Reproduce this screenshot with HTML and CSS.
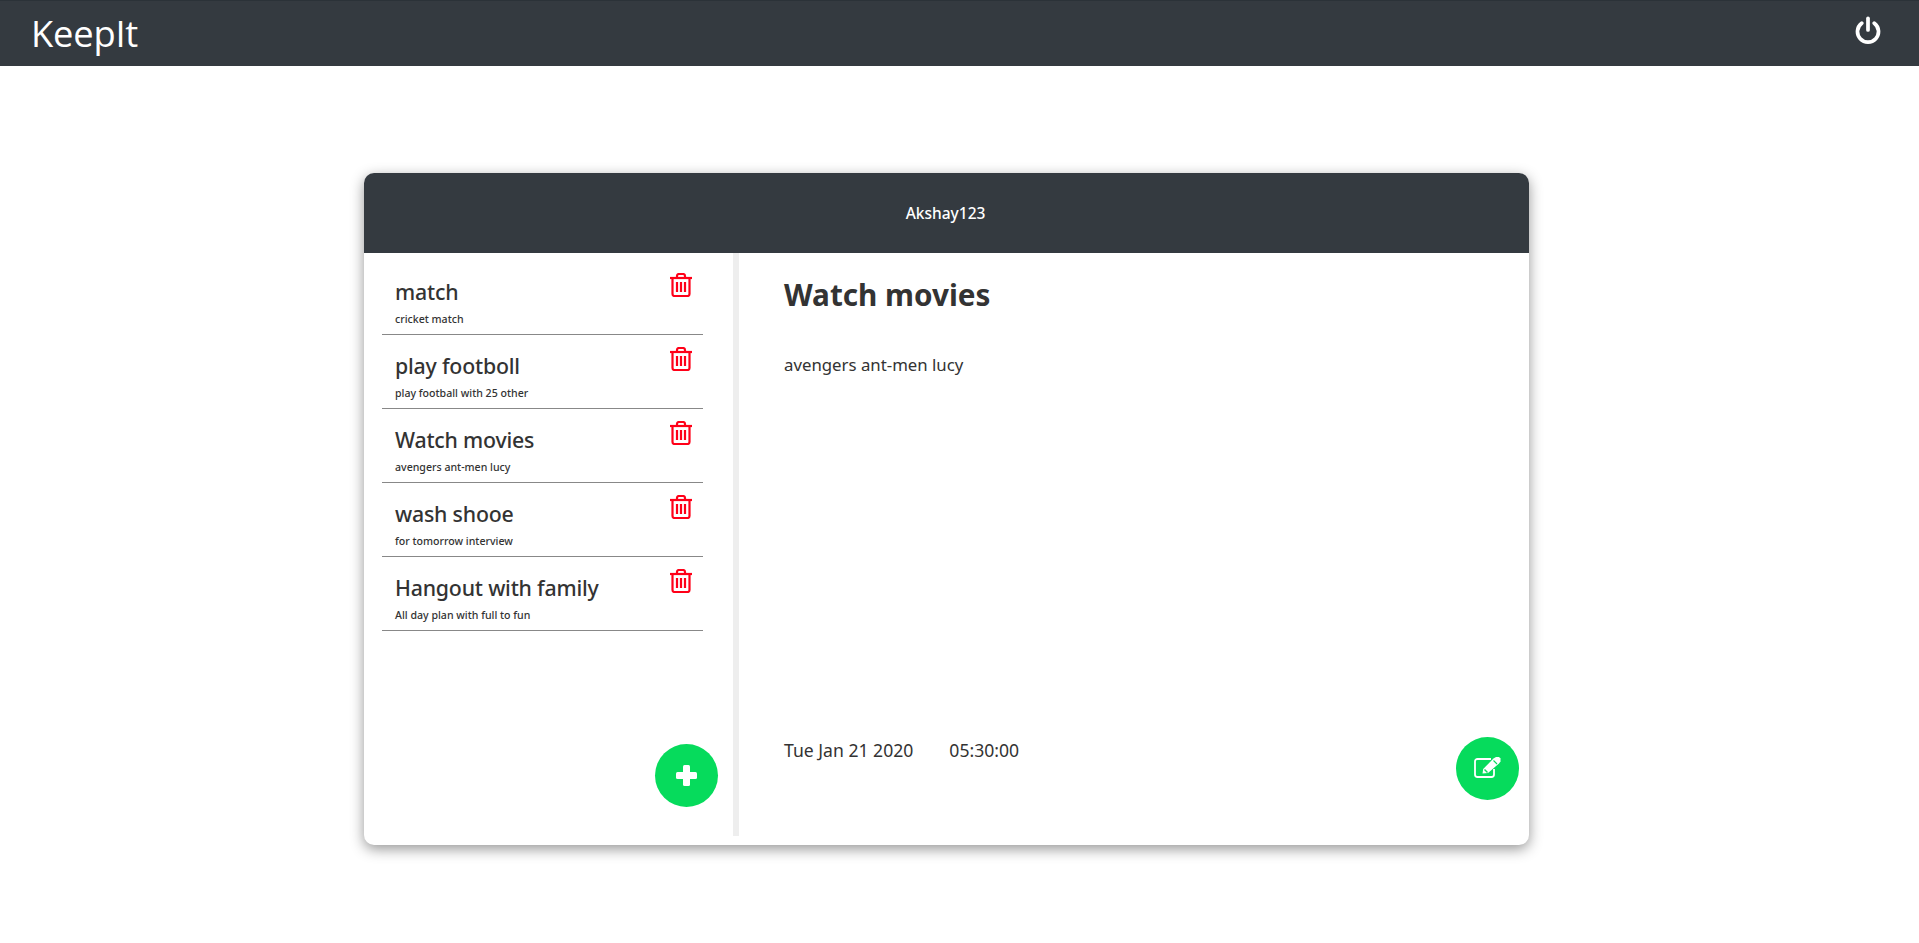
FILE: index.html
```html
<!DOCTYPE html>
<html lang="en">
<head>
<meta charset="utf-8">
<title>KeepIt</title>
<link rel="stylesheet" href="styles.css">
</head>
<body>
<svg class="defs" width="0" height="0" aria-hidden="true">
  <symbol id="trash" viewBox="0 0 22 24">
    <g fill="none" stroke="currentColor" stroke-width="2.2">
      <path d="M0 5h22"/>
      <path d="M7 5V3a2 2 0 0 1 2-2h4a2 2 0 0 1 2 2v2"/>
      <path d="M2.500 5v16a2 2 0 0 0 2 2h13a2 2 0 0 0 2-2V5"/>
      <path d="M7 9v10M11 9v10M15 9v10"/>
    </g>
  </symbol>
</svg>
<nav class="navbar">
  <span class="brand">KeepIt</span>
  <svg class="power" viewBox="0 0 24 24"><path d="M12 2v10" fill="none" stroke="#fff" stroke-width="3.200" stroke-linecap="round"/><path d="M6.600 6.200a9 9 0 1 0 10.800 0" fill="none" stroke="#fff" stroke-width="3.200" stroke-linecap="round"/></svg>
</nav>
<main class="page">
  <section class="card">
    <header class="card-head">Akshay123</header>
    <div class="card-body">
      <aside class="sidebar">
        <ul class="notes">
          <li class="note"><div><h3 class="note-title">match</h3><p class="note-sub">cricket match</p></div><svg class="trash"><use href="#trash"/></svg></li>
          <li class="note"><div><h3 class="note-title">play footboll</h3><p class="note-sub">play football with 25 other</p></div><svg class="trash"><use href="#trash"/></svg></li>
          <li class="note"><div><h3 class="note-title">Watch movies</h3><p class="note-sub">avengers ant-men lucy</p></div><svg class="trash"><use href="#trash"/></svg></li>
          <li class="note"><div><h3 class="note-title">wash shooe</h3><p class="note-sub">for tomorrow interview</p></div><svg class="trash"><use href="#trash"/></svg></li>
          <li class="note"><div><h3 class="note-title">Hangout with family</h3><p class="note-sub">All day plan with full to fun</p></div><svg class="trash"><use href="#trash"/></svg></li>
        </ul>
        <button class="fab fab-add" aria-label="Add">
          <svg viewBox="0 0 21 21" class="plus"><rect x="7" width="7" height="21" rx="1.500" fill="#fff"/><rect y="7" width="21" height="7" rx="1.500" fill="#fff"/></svg>
        </button>
      </aside>
      <article class="detail">
        <h1 class="detail-title">Watch movies</h1>
        <p class="detail-text">avengers ant-men lucy</p>
        <div class="detail-meta"><span>Tue Jan 21 2020</span><span>05:30:00</span></div>
        <button class="fab fab-edit" aria-label="Edit">
          <svg viewBox="0 0 27 21" class="edit">
            <path d="M20 12v5.500a2.500 2.500 0 0 1-2.500 2.500H3.500A2.500 2.500 0 0 1 1 17.500v-13A2.500 2.500 0 0 1 3.500 2H17" fill="none" stroke="#fff" stroke-width="1.800"/>
            <path d="M8.500 16.500l.7-4.500L19.500 1.500 22 0l3 0 1.500 1.500 0 3-1.500 2L14 16z" fill="#fff"/>
            <path d="M19.500 3.500l3.500 3.500" stroke="#06db5c" stroke-width="1.100"/>
            <path d="M10.500 12.500l3 3" stroke="#06db5c" stroke-width="1.400"/>
          </svg>
        </button>
      </article>
    </div>
  </section>
</main>
</body>
</html>
```
FILE: styles.css
```css
* { box-sizing: border-box; }
html, body { margin: 0; padding: 0; }
body {
  background: #fff;
  color: #333;
  font-family: "Noto Sans", "Open Sans", sans-serif;
  height: 943px;
  overflow: hidden;
}
.defs { position: absolute; }
.navbar {
  height: 66px;
  background: #343a40;
  border-top: 1px solid #2b3238;
  display: flex;
  align-items: center;
  justify-content: space-between;
  padding: 0 37px 0 31px;
}
.brand { color: #fff; font-family: "Open Sans", "Noto Sans", sans-serif; font-size: 36.300px; line-height: 1; letter-spacing: -0.2px; }
.power { width: 28px; height: 28px; margin-bottom: 7px; }
.page { padding: 107px 0 0 364px; display: flex; }
.card {
  width: 1165px;
  height: 672px;
  border-radius: 10px;
  background: #fff;
  box-shadow: 0 4px 14px rgba(0, 0, 0, .42);
  display: flex;
  flex-direction: column;
}
.card-head {
  height: 80px;
  flex: none;
  background: #343a40;
  border-radius: 10px 10px 0 0;
  color: #fff;
  font-size: 15.500px;
  font-weight: 500;
  display: flex;
  align-items: center;
  justify-content: center;
  padding-right: 2px;
}
.card-body { flex: 1; display: flex; padding-bottom: 9px; }
.sidebar {
  width: 375px;
  flex: none;
  border-right: 6px solid #eee;
  padding: 8px 0 0 18px;
  position: relative;
}
.notes { list-style: none; margin: 0; padding: 0; width: 321px; }
.note {
  height: 74px;
  border-bottom: 1px solid #888;
  padding: 0 11px 0 13px;
  display: flex;
  justify-content: space-between;
  align-items: flex-start;
}
.note-title { margin: 16px 0 0; font-size: 21.300px; line-height: 30px; font-weight: 500; letter-spacing: -0.2px; }
.note-sub { margin: 5px 0 0; font-size: 10.600px; line-height: 14px; font-weight: 500; }
.trash { width: 22px; height: 24px; color: #ff0018; margin-top: 12px; flex: none; }
.fab {
  position: absolute;
  width: 63px;
  height: 63px;
  border: 0;
  padding: 0;
  border-radius: 50%;
  background: #06db5c;
  display: flex;
  align-items: center;
  justify-content: center;
}
.fab-add { left: 291px; top: 491px; }
.fab-edit { left: 717px; top: 484px; }
.plus { width: 21px; height: 21px; }
.edit { width: 27px; height: 21px; margin-bottom: 3px; }
.detail { flex: 1; padding: 21.500px 45px; position: relative; }
.detail-title { margin: 0; font-size: 29.700px; line-height: 40px; font-weight: 700; }
.detail-text { margin: 38.500px 0 0; font-size: 16.800px; line-height: 24px; }
.detail-meta { margin-top: 361px; font-size: 17.600px; line-height: 24px; display: flex; gap: 36px; }
```
